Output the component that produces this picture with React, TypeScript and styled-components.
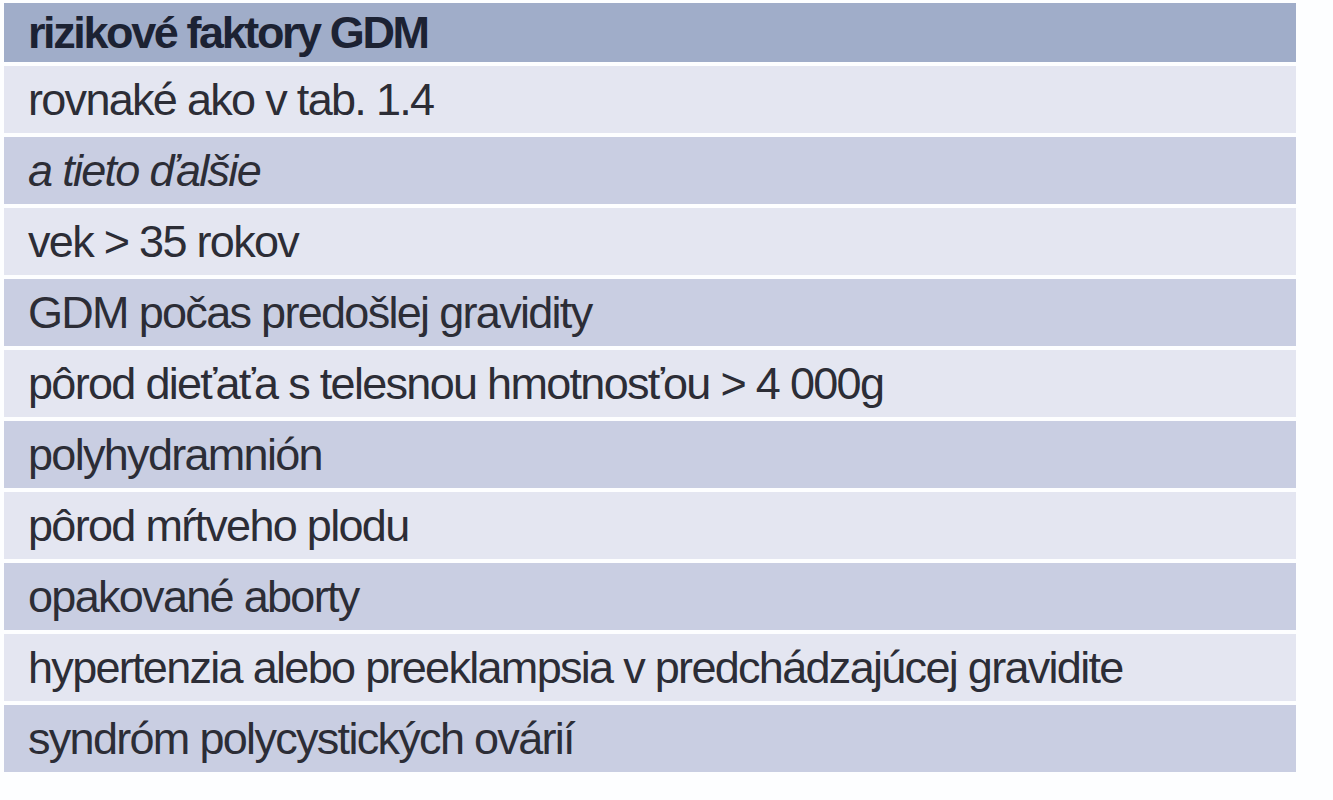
import React from 'react';
import styled, { createGlobalStyle } from 'styled-components';

const GlobalStyle = createGlobalStyle`
  html, body {
    margin: 0;
    padding: 0;
    background: #ffffff;
  }
  body {
    font-family: "Liberation Sans", Arial, sans-serif;
  }
`;

const Page = styled.div`
  width: 1333px;
  height: 800px;
  padding: 3px 0 0 4px;
  box-sizing: border-box;
  background: #fdfeff;
`;

const Table = styled.div`
  width: 1292px;
  display: flex;
  flex-direction: column;
  gap: 4px;
`;

type Tone = 'head' | 'light' | 'dark';

const bg: Record<Tone, string> = {
  head: '#a0adc9',
  light: '#e4e6f1',
  dark: '#c9cee2',
};

const Row = styled.div<{ $tone: Tone }>`
  height: ${(p) => (p.$tone === 'head' ? 59 : 67)}px;
  display: flex;
  align-items: center;
  padding-left: 24px;
  box-sizing: border-box;
  background: ${(p) => bg[p.$tone]};
  color: ${(p) => (p.$tone === 'head' ? '#1c2233' : '#2c2d36')};
  font-size: 45px;
  font-weight: ${(p) => (p.$tone === 'head' ? 700 : 400)};
  letter-spacing: ${(p) => (p.$tone === 'head' ? -2.4 : -1.7)}px;
  white-space: nowrap;
`;

const Italic = styled.span`
  font-style: italic;
`;

const rows: { text: React.ReactNode }[] = [
  { text: 'rovnaké ako v tab. 1.4' },
  { text: <Italic>a tieto ďalšie</Italic> },
  { text: 'vek > 35 rokov' },
  { text: 'GDM počas predošlej gravidity' },
  { text: 'pôrod dieťaťa s telesnou hmotnosťou > 4 000g' },
  { text: 'polyhydramnión' },
  { text: 'pôrod mŕtveho plodu' },
  { text: 'opakované aborty' },
  { text: 'hypertenzia alebo preeklampsia v predchádzajúcej gravidite' },
  { text: 'syndróm polycystických ovárií' },
];

export default function App() {
  return (
    <>
      <GlobalStyle />
      <Page>
        <Table>
          <Row $tone="head">rizikové faktory GDM</Row>
          {rows.map((r, i) => (
            <Row key={i} $tone={i % 2 === 0 ? 'light' : 'dark'}>
              {r.text}
            </Row>
          ))}
        </Table>
      </Page>
    </>
  );
}
